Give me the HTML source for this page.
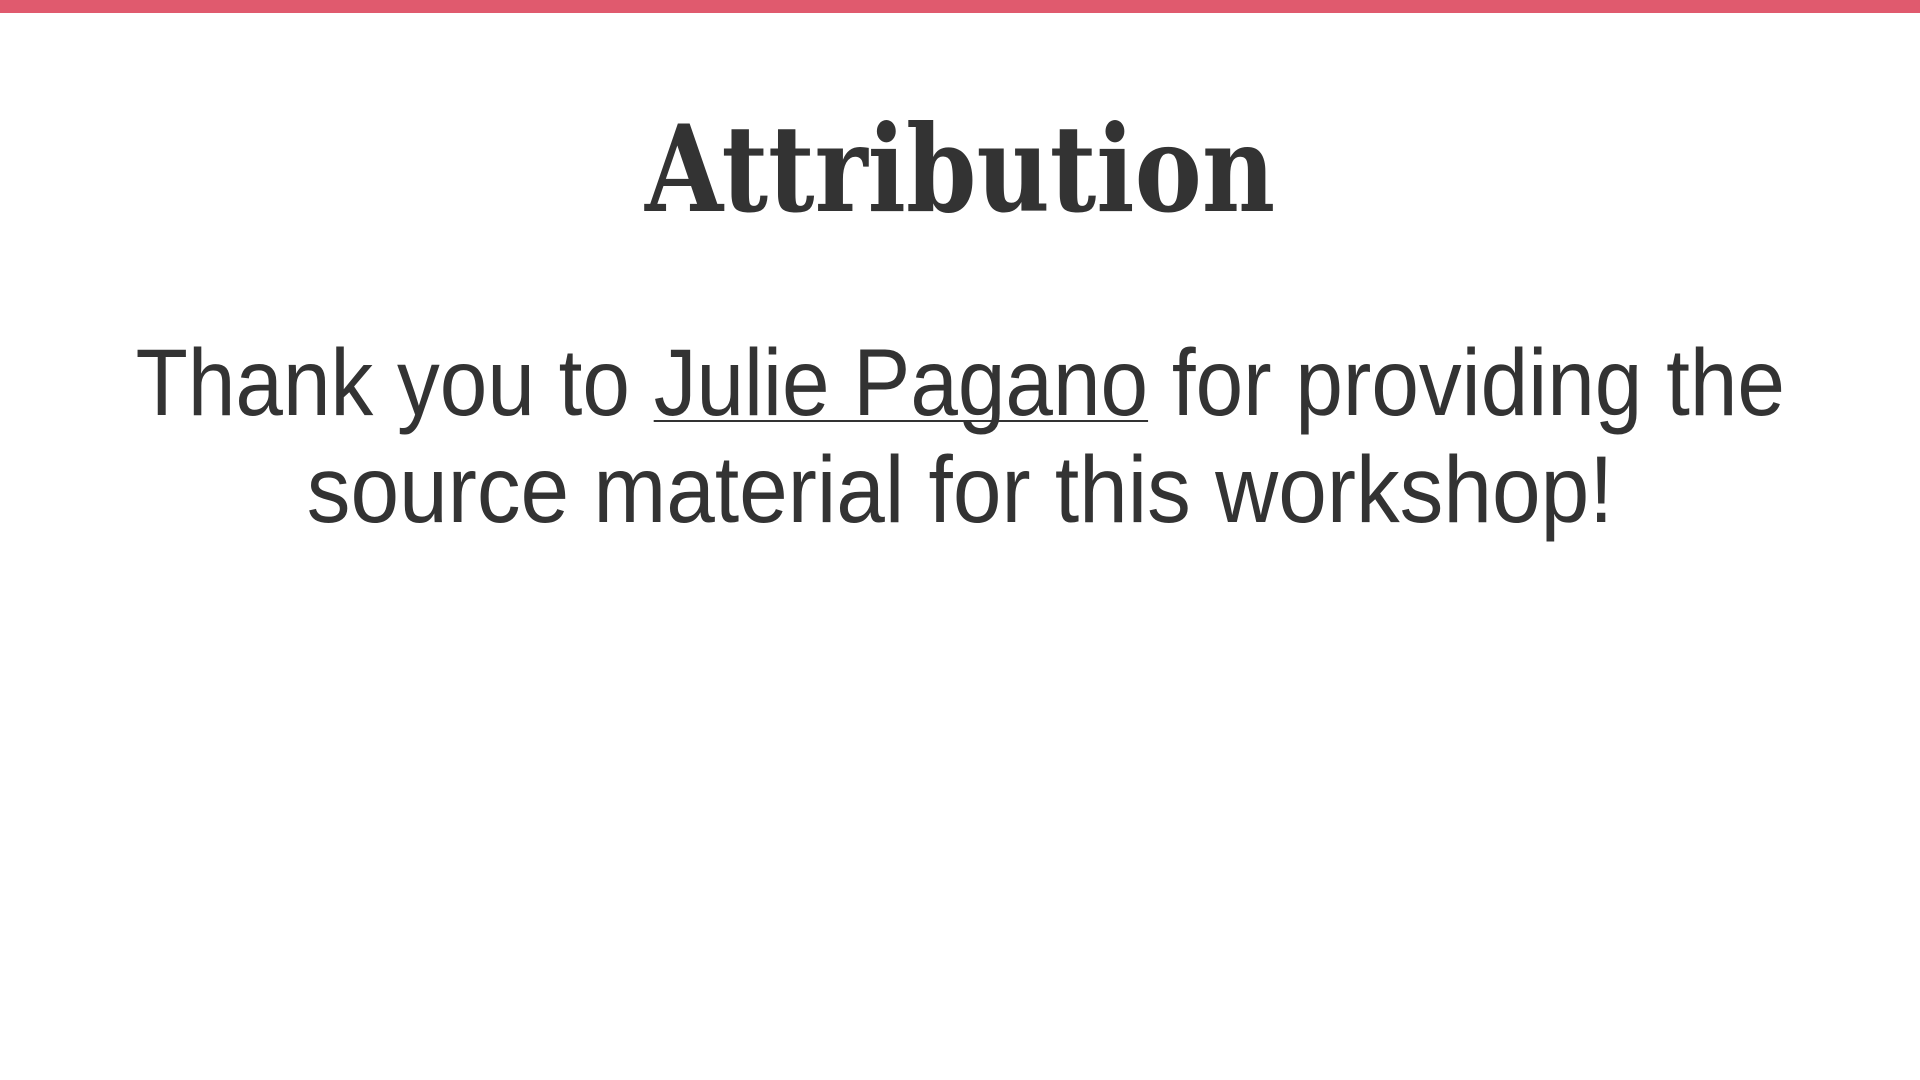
<!DOCTYPE html>
<html><head><meta charset="utf-8"><style>
html,body{margin:0;padding:0;width:1920px;height:1080px;background:#fff;overflow:hidden;position:relative}
.bar{position:absolute;left:0;top:0;width:1920px;height:13px;background:#e05a6e}
h1{position:absolute;left:0;top:110px;width:1920px;margin:0;text-align:center;font-family:"DejaVu Serif",serif;font-weight:bold;font-size:120px;line-height:1;color:#333}
h1 span{display:inline-block;transform:scaleX(0.84);transform-origin:center}
.body{position:absolute;left:0;top:330px;width:1920px;text-align:center;font-family:"Liberation Sans",sans-serif;font-size:95px;line-height:107px;color:#333;font-weight:300}
.body a{color:#333;text-decoration:underline;text-decoration-thickness:2px;text-underline-offset:5px;text-decoration-skip-ink:none}
.body span{display:inline-block;transform:scaleX(0.9)}
.body span.l2{transform:scaleX(0.92)}
</style></head><body>
<div class="bar"></div>
<h1><span>Attribution</span></h1>
<div class="body"><span>Thank you to <a>Julie Pagano</a> for providing the</span><br><span class="l2">source material for this workshop!</span></div>
</body></html>
